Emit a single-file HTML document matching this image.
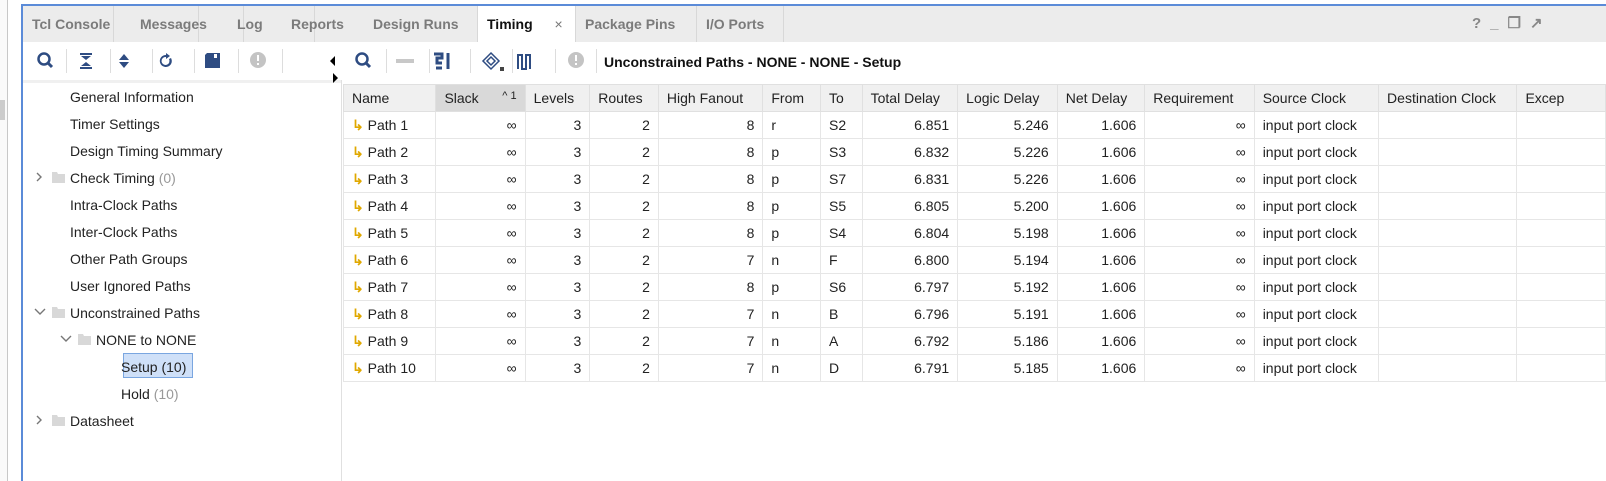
<!DOCTYPE html><html><head><style>
*{margin:0;padding:0;box-sizing:border-box}
body{width:1606px;height:481px;overflow:hidden;background:#fff;font-family:"Liberation Sans",sans-serif;font-size:14px;color:#222;position:relative}
.a{position:absolute}
.tab{position:absolute;top:6px;height:36px;line-height:36px;font-weight:bold;color:#7b7b7b;padding-left:9px;border-right:1px solid #d8d8d8;font-size:14px}
.sep{position:absolute;width:1px;height:24px;background:#ddd;top:49px}
.tree{position:absolute;left:70px;line-height:27px;font-size:14px}
.g{color:#999}
table{position:absolute;left:343px;top:84px;border-collapse:collapse;table-layout:fixed;font-size:14px}
td,th{height:27px;border:1px solid #e6e6e6;padding:0 8px;white-space:nowrap;overflow:hidden;font-weight:normal}
th{background:#f0f0f0;text-align:left;border-color:#e0e0e0}
td.r{text-align:right}
</style></head><body>
<div class="a" style="left:0;top:0;width:8px;height:481px;background:#fafafa;border-right:1px solid #c8c8c8"></div>
<div class="a" style="left:0;top:100px;width:5px;height:20px;background:#ccc"></div>
<div class="a" style="left:21px;top:4px;width:1585px;height:477px;border-left:2px solid #5b8bd8;border-top:2px solid #5b8bd8"></div>
<div class="a" style="left:23px;top:6px;width:1583px;height:36px;background:#ececec"></div>
<div class="tab" style="left:23px;width:91px">Tcl Console</div>
<div class="tab" style="left:114px;width:85px;padding-left:26px">Messages</div>
<div class="tab" style="left:199px;width:45px;padding-left:38px">Log</div>
<div class="tab" style="left:244px;width:71px;padding-left:47px">Reports</div>
<div class="tab" style="left:315px;width:163px;padding-left:58px">Design Runs</div>
<div class="tab" style="left:478px;width:98px;background:#fff;color:#111;padding-left:9px">Timing <span style="font-weight:normal;color:#777;margin-left:18px">×</span></div>
<div class="tab" style="left:576px;width:121px;padding-left:9px">Package Pins</div>
<div class="tab" style="left:697px;width:87px">I/O Ports</div>
<div class="a" style="left:1472px;top:14px;color:#888;font-weight:bold;font-size:15px;letter-spacing:9px">?_&#x2750;&#x2197;</div>
<!-- toolbar -->
<div class="a" style="left:23px;top:42px;width:1583px;height:38px;background:#fff"></div>
<div class="a" style="left:23px;top:80px;width:318px;height:3px;background:#f0f0f0"></div>
<svg class="a" style="left:36px;top:51px" width="280" height="20">
<circle cx="8" cy="8" r="5.5" fill="none" stroke="#2e4c82" stroke-width="2.5"/><line x1="12" y1="12" x2="16" y2="16" stroke="#2e4c82" stroke-width="3"/>
<g fill="#2e4c82"><rect x="44" y="2" width="12" height="2"/><rect x="44" y="16" width="12" height="2"/><path d="M45 5h10l-5 4zM45 15h10l-5-4z"/>
<path d="M88 3l5 6h-10zM88 17l5-6h-10z"/>
<path d="M130 4a6 6 0 1 0 5 3l-2 1a4 4 0 1 1-3-2v2l4-3-4-3z"/>
<path d="M171 2h13v15h-15v-13zM180 3h2v4h-2z"/></g>
<rect x="178" y="3" width="3" height="4" fill="#fff"/>
<circle cx="222" cy="9" r="8" fill="#c4c4c4"/><rect x="221" y="4" width="2" height="6" fill="#fff"/><rect x="221" y="12" width="2" height="2" fill="#fff"/>
</svg>
<div class="sep" style="left:66px"></div><div class="sep" style="left:110px"></div><div class="sep" style="left:152px"></div><div class="sep" style="left:194px"></div><div class="sep" style="left:238px"></div><div class="sep" style="left:282px"></div>
<svg class="a" style="left:328px;top:56px" width="14" height="28"><path d="M7 0v10l-5-5z M5 17v10l5-5z" fill="#000"/></svg>
<div class="a" style="left:341px;top:80px;width:1px;height:401px;background:#e0e0e0"></div>
<svg class="a" style="left:354px;top:51px" width="240" height="22">
<circle cx="8" cy="8" r="5.5" fill="none" stroke="#2e4c82" stroke-width="2.5"/><line x1="12" y1="12" x2="16" y2="16" stroke="#2e4c82" stroke-width="3"/>
<rect x="42" y="8" width="18" height="4" fill="#c8c8c8"/>
<path d="M80 3h8v4h-5v5h5M94 2v16M88 12l-6 0M82 17h6" stroke="#2e4c82" stroke-width="3" fill="none"/>
<path d="M137 2l8 8-8 8-8-8z M137 6l4 4-4 4-4-4z" stroke="#2e4c82" stroke-width="1.5" fill="none"/><path d="M146 16h4v4h-4z" fill="#444"/>
<path d="M164 18v-14h4v14h4v-14h4v14" stroke="#2e4c82" stroke-width="2" fill="none"/>
<circle cx="222" cy="9" r="8" fill="#c4c4c4"/><rect x="221" y="4" width="2" height="6" fill="#fff"/><rect x="221" y="12" width="2" height="2" fill="#fff"/>
</svg>
<div class="sep" style="left:386px"></div><div class="sep" style="left:429px"></div><div class="sep" style="left:470px"></div><div class="sep" style="left:512px"></div><div class="sep" style="left:555px"></div><div class="sep" style="left:596px"></div>
<div class="a" style="left:604px;top:54px;font-weight:bold;font-size:14px;color:#111">Unconstrained Paths - NONE - NONE - Setup</div>
<!-- tree -->
<div class="tree" style="top:84px">General Information</div>
<div class="tree" style="top:111px">Timer Settings</div>
<div class="tree" style="top:138px">Design Timing Summary</div>
<div class="tree" style="top:165px">Check Timing <span class="g">(0)</span></div>
<div class="tree" style="top:192px">Intra-Clock Paths</div>
<div class="tree" style="top:219px">Inter-Clock Paths</div>
<div class="tree" style="top:246px">Other Path Groups</div>
<div class="tree" style="top:273px">User Ignored Paths</div>
<div class="tree" style="top:300px">Unconstrained Paths</div>
<div class="tree" style="top:327px;left:96px">NONE to NONE</div>
<div class="a" style="left:123px;top:353px;width:70px;height:25px;background:#cfe0f8;border:1px solid #7aa6e0"></div>
<div class="tree" style="top:354px;left:121px">Setup (10)</div>
<div class="tree" style="top:381px;left:121px">Hold <span class="g">(10)</span></div>
<div class="tree" style="top:408px">Datasheet</div>
<svg class="a" style="left:34px;top:170px" width="80" height="260" fill="none" stroke="#777" stroke-width="1.4">
<path d="M3 3l4 4-4 4"/><path d="M1 139l5 5 5-5"/><path d="M27 166l5 5 5-5"/><path d="M3 246l4 4-4 4"/>
<g fill="#d8d8d8" stroke="none"><path d="M18 2h5l1 2h7v9h-13z"/><path d="M18 137h5l1 2h7v9h-13z"/><path d="M44 164h5l1 2h7v9h-13z"/><path d="M18 245h5l1 2h7v9h-13z"/></g>
</svg>
<table>
<colgroup><col style="width:93px"><col style="width:91px"><col style="width:65px"><col style="width:69px"><col style="width:105px"><col style="width:58px"><col style="width:42px"><col style="width:96px"><col style="width:100px"><col style="width:88px"><col style="width:110px"><col style="width:125px"><col style="width:139px"><col style="width:90px"></colgroup>
<tr><th>Name</th><th style="background:#d9d9d9">Slack<span style="float:right;font-size:11px">^ 1</span></th><th>Levels</th><th>Routes</th><th>High Fanout</th><th>From</th><th>To</th><th>Total Delay</th><th>Logic Delay</th><th>Net Delay</th><th>Requirement</th><th>Source Clock</th><th>Destination Clock</th><th>Excep</th></tr>
<tbody id="b"></tbody>
</table>
<script>
var d=[["r","S2","6.851","5.246",8],["p","S3","6.832","5.226",8],["p","S7","6.831","5.226",8],["p","S5","6.805","5.200",8],["p","S4","6.804","5.198",8],["n","F","6.800","5.194",7],["p","S6","6.797","5.192",8],["n","B","6.796","5.191",7],["n","A","6.792","5.186",7],["n","D","6.791","5.185",7]];
var h="";d.forEach(function(r,i){h+='<tr><td><span style="color:#e0a800;font-weight:bold">&#8627;</span> Path '+(i+1)+'</td><td class="r">∞</td><td class="r">3</td><td class="r">2</td><td class="r">'+r[4]+'</td><td>'+r[0]+'</td><td>'+r[1]+'</td><td class="r">'+r[2]+'</td><td class="r">'+r[3]+'</td><td class="r">1.606</td><td class="r">∞</td><td>input port clock</td><td></td><td></td></tr>'});
document.getElementById("b").innerHTML=h;
</script>
</body></html>
